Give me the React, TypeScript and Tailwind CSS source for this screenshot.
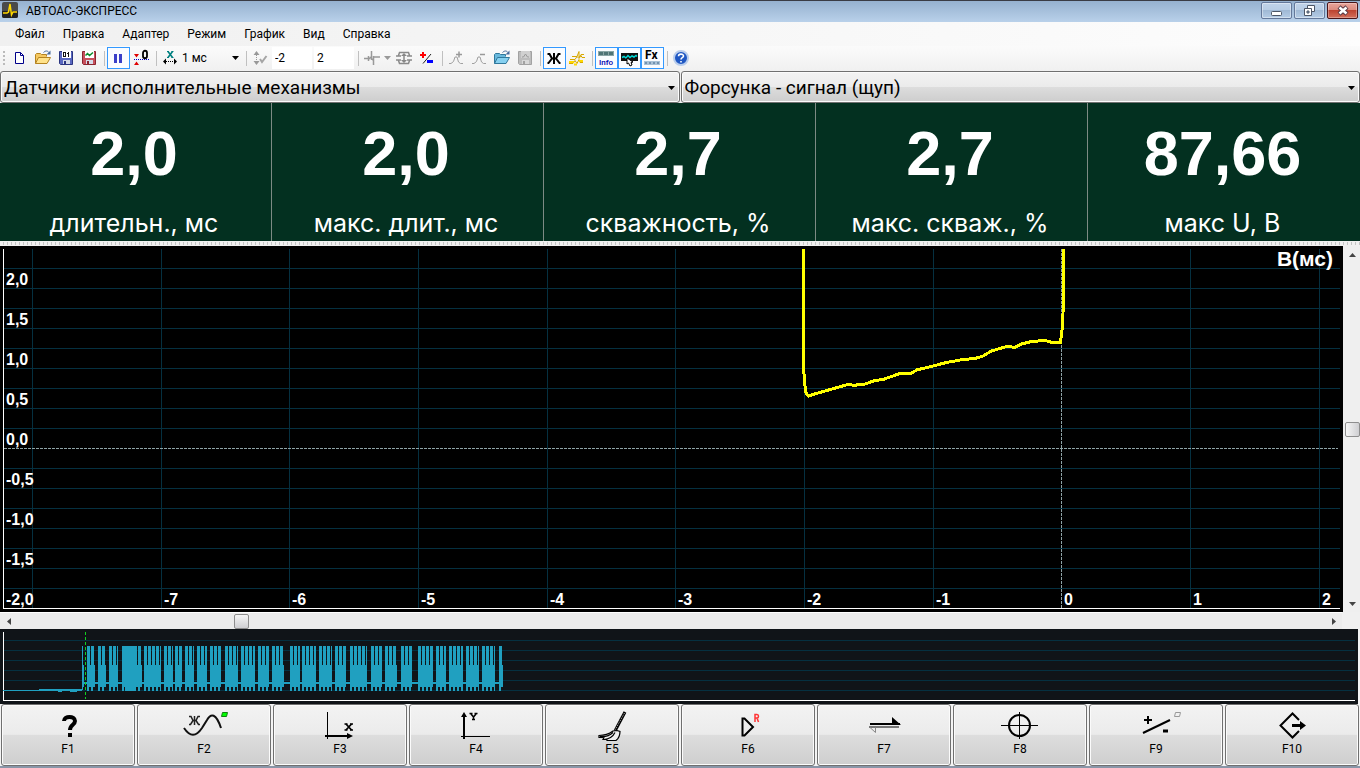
import type { ReactNode } from "react";

const MENU = ["Файл", "Правка", "Адаптер", "Режим", "График", "Вид", "Справка"];

const READINGS = [
  { value: "2,0", label: "длительн., мс" },
  { value: "2,0", label: "макс. длит., мс" },
  { value: "2,7", label: "скважность, %" },
  { value: "2,7", label: "макс. скваж., %" },
  { value: "87,66", label: "макс U, В" },
];

const CHART_W = 1343;
const CHART_H = 366;
const Y_TICKS = ["2,0", "1,5", "1,0", "0,5", "0,0", "-0,5", "-1,0", "-1,5", "-2,0"];
const X_TICKS: [string, number][] = [
  ["-7", 161], ["-6", 289], ["-5", 418], ["-4", 547], ["-3", 675],
  ["-2", 804], ["-1", 933], ["0", 1061], ["1", 1190], ["2", 1319],
];
const H_LINES = Array.from({ length: 17 }, (_, i) => 22 + i * 20);

const TRACE =
  "803.5,3 803.5,120 804.5,136 806,147 808.5,150 813,148.5 830,143.5 848,138.5 854,139.3 865,138 875,134.5 883,133.5 893,130 900.5,127.3 911.5,127.3 916.5,124 933,120 946.5,116.5 963,113.5 975,112.5 983,110 991.5,105 1006.5,100.5 1015,101.3 1021.5,98 1031.5,95.5 1045,94.5 1051.5,96.3 1060.5,96.3 1062,84 1063,70 1063.5,3";

const BURSTS: [number, number][] = [
  [87, 95], [98, 106], [109, 118], [122, 142], [144, 161], [164, 173], [175, 182],
  [185, 194], [197, 207], [210, 221], [225, 238], [241, 255], [258, 269], [272, 284],
  [290, 300], [302, 316], [319, 332], [335, 346], [350, 367], [371, 382], [385, 397],
  [401, 412], [418, 433], [436, 446], [449, 463], [466, 479], [482, 495], [499, 503],
];

function Svg({ w = 16, h = 16, children }: { w?: number; h?: number; children: ReactNode }) {
  return (
    <svg width={w} height={h} viewBox={`0 0 ${w} ${h}`} fill="none" aria-hidden="true" className="shrink-0">
      {children}
    </svg>
  );
}

/* ---------- toolbar icons ---------- */

const NewIcon = () => (
  <Svg>
    <path d="M3.500 2.500h5l3 3v8h-8z" fill="#fff" stroke="#00008b" />
    <path d="M8.500 2.500v3h3" stroke="#00008b" />
  </Svg>
);

function FolderIcon({ back, front, edge }: { back: string; front: string; edge: string }) {
  return (
    <Svg>
      <path d="M.5 13.500v-9l1-1h4l1 1h5v2" fill={back} stroke={edge} />
      <path d="M.5 13.500l3-6h12l-3.500 6z" fill={front} stroke={edge} />
      <path d="M8.500 2.500c2-2 4-2 5.500 0" stroke="#466a9c" />
      <path d="M15.500 .5v4h-4z" fill="#466a9c" />
    </Svg>
  );
}

function DiskIcon({ body, edge, kind }: { body: string; edge: string; kind: "bits" | "wave" | "plain" }) {
  return (
    <Svg>
      <path d="M1.500 1.500h13v13h-12l-1-1z" fill={body} stroke={edge} />
      <path d="M4 1h9v7H4z" fill={kind === "plain" ? "#d0d0d0" : "#fff"} />
      <path d="M5 10h7v4H5z" fill={kind === "plain" ? "#d8d8d8" : "#d5dbe8"} />
      <path d="M6 11h2v3H6z" fill={edge} />
      {kind === "bits" && (
        <>
          <rect x="5.500" y="2.500" width="2" height="4" stroke="#111" />
          <path d="M10.500 2v5M9 3.500h1" stroke="#111" />
        </>
      )}
      {kind === "wave" && <path d="M4.500 5.500l2-2 2 2 3.500-3" stroke="#0a8a2a" strokeWidth="1.500" />}
      {kind === "plain" && <path d="M5 7h1.500l2-3 2 3H12" stroke="#999" />}
    </Svg>
  );
}

const PauseIcon = () => (
  <Svg>
    <path d="M4 4h3v9H4zM9 4h3v9H9z" fill="#3a3fc8" />
  </Svg>
);

const ZeroLevelIcon = () => (
  <Svg w={18} h={18}>
    <path d="M1 5h5L3.500 8.500zM1 16h5L3.500 12.500z" fill="#e00000" />
    <path d="M1 10.500h15" stroke="#0000d0" strokeDasharray="1 1" />
    <path d="M10 4c0-3 4-3 4 0v3c0 3-4 3-4 0z" stroke="#000" strokeWidth="1.800" />
  </Svg>
);

const TimeScaleIcon = () => (
  <Svg>
    <path d="M6 1.500l4.500 6M10.500 1.500l-4.500 6" stroke="#008080" strokeWidth="1.600" />
    <path d="M5 1.500h2M9.500 1.500h2M5 7.500h2M9.500 7.500h2" stroke="#008080" />
    <path d="M1 11.500l3-3v6zM15 11.500l-3-3v6z" fill="#000" />
    <path d="M4 11.500h9" stroke="#000" strokeDasharray="1 1" />
  </Svg>
);

const RangeIcon = () => (
  <Svg>
    <path d="M4.500 1l3 4h-6zM4.500 15l3-4h-6z" fill="#999" />
    <path d="M4.500 5v6" stroke="#999" strokeDasharray="1 1" />
    <path d="M8 9l2 3 4.500-6" stroke="#a5a5a5" strokeWidth="2" />
  </Svg>
);

const PulseIcon = () => (
  <Svg>
    <path d="M0 8.500h5M4.500 6v5M7.500 1v9M7.500 2.500v3M9.500 6v9M10 7h6M5 9l2-2M8 9l2 2" stroke="#999" strokeWidth="1.500" />
  </Svg>
);

const FitIcon = () => (
  <Svg>
    <path d="M2.500 5.500l1-3h9l1 3M2.500 10.500l1 3h9l1-3M0 6h5M0 10h5M11 6h5M11 10h5" stroke="#8a8a8a" strokeWidth="1.500" />
    <path d="M8 3l3 3H5zM8 13l3-3H5z" fill="#888" />
    <path d="M8 5v6" stroke="#888" strokeWidth="1.500" />
  </Svg>
);

const SignIcon = () => (
  <Svg>
    <path d="M1 5h6M4 2v6" stroke="#f00" strokeWidth="2" />
    <path d="M4 13.500L12 4" stroke="#222" />
    <path d="M8 10h6v3H8z" fill="#00f" />
  </Svg>
);

const PeakIcon = ({ plus }: { plus?: boolean }) => (
  <Svg>
    <path d="M1 13.500h2l2.500-2 1.500-4.500h2l1.500 5 2 1.500h2.500" stroke="#a0a0a0" />
    <path d={plus ? "M8 4.500h6M11 1.500v6" : "M9 4.500h5"} stroke="#999" strokeWidth="1.500" />
  </Svg>
);

const ZheIcon = () => (
  <Svg>
    <path
      d="M8 3v11M1.500 4h2l2.500 4.500h4L12.500 4h2M1.500 13h1l3.500-4.500M14.500 13h-1L10 8.500"
      stroke="#000"
      strokeWidth="2"
    />
  </Svg>
);

const YellowWavesIcon = () => (
  <Svg>
    <path d="M0 13.500h4l2-3 2 3 2-4 1 3h3M1 9.500h5l2-3 2 2 2-3 1 2h3M3 6.500h5l2-5v6l2-3h3" stroke="#d8a800" />
    <path d="M0 12h5M5 14.500h3M10 11h4" stroke="#ffd800" strokeWidth="2" />
  </Svg>
);

const InfoIcon = () => (
  <svg width="17" height="18" viewBox="0 0 17 18" aria-hidden="true">
    <path d="M0 2h16v5H0z" fill="#8aa5a6" />
    <path d="M1 3h4v3H1zM6 3h4v3H6zM11 3h4v3h-4z" fill="#4f7476" />
    <text x="1" y="16" fontFamily="Roboto, sans-serif" fontSize="8" fontWeight="500" fill="#0000b0">Info</text>
  </svg>
);

const CursorWaveIcon = () => (
  <Svg w={17} h={18}>
    <path d="M0 4h17v8H0z" fill="#111" />
    <path d="M1 8.500l2-1 2 1.500 2-2.500 2 2 2-1.500 2 1 2-1.500 1 1" stroke="#00d8d8" strokeWidth="1.500" />
    <path d="M6 9l6 4-2 .5 1 2.500-2 1-1.500-3-1.500 1z" fill="#fff" stroke="#000" />
  </Svg>
);

const FxIcon = () => (
  <svg width="17" height="18" viewBox="0 0 17 18" aria-hidden="true">
    <text x="1" y="10" fontFamily="Roboto, sans-serif" fontSize="12" fontWeight="700" fill="#000">Fx</text>
    <path d="M0 12h16v4H0z" fill="#a9c1d6" />
    <path d="M1 13h2v2H1zM5 13h2v2H5zM9 13h2v2H9zM13 13h2v2h-2z" fill="#7292b0" />
  </svg>
);

const HelpIcon = () => (
  <Svg>
    <circle cx="8" cy="8" r="7" fill="#1f57c3" stroke="#b9cdec" strokeWidth="2" />
    <path
      d="M5.500 6.200C5.500 3.500 10.500 3.500 10.500 6c0 1.800-2.500 1.600-2.500 3.500M8 11v1.500"
      stroke="#fff"
      strokeWidth="1.600"
    />
  </Svg>
);

/* ---------- controls ---------- */

const Separator = () => (
  <span className="flex h-[22px] w-[6px] shrink-0 items-center justify-center">
    <span className="h-[15px] w-px bg-[#c0c0c0]" />
  </span>
);

function Tool({ label, on, children }: { label: string; on?: boolean; children: ReactNode }) {
  return (
    <button
      type="button"
      aria-label={label}
      className={
        on
          ? "flex h-[22px] w-[23px] shrink-0 items-center border border-[#3399ff] bg-[#fafcff] pl-[2px]"
          : "flex h-[22px] w-[23px] shrink-0 items-center border border-transparent pl-[2px]"
      }
    >
      {children}
    </button>
  );
}

function Caret({ color = "#000" }: { color?: string }) {
  return (
    <svg width="7" height="4" viewBox="0 0 7 4" aria-hidden="true" className="shrink-0">
      <path d="M0 0h7L3.500 4z" fill={color} />
    </svg>
  );
}

function BigSelect({ label, value }: { label: string; value: string }) {
  return (
    <div className="relative flex-1">
      <select
        aria-label={label}
        defaultValue={value}
        className="block h-8 w-full appearance-none rounded-[3px] border border-[#707070] bg-[linear-gradient(#f3f3f3,#ebebeb_49%,#dddddd_50%,#cdcdcd)] px-[3px] pt-[2px] font-[Roboto,sans-serif] text-[19px] leading-[28px] text-black inset-ring inset-ring-[#fbfbfb]"
      >
        <option>{value}</option>
      </select>
      <span className="pointer-events-none absolute top-[15px] right-[5px]">
        <Caret />
      </span>
    </div>
  );
}

function TitleButton({ label, close, children }: { label: string; close?: boolean; children: ReactNode }) {
  return (
    <button
      type="button"
      aria-label={label}
      className={
        close
          ? "flex h-[17px] w-[31px] items-center justify-center rounded-[2px] border border-[#4a1518] bg-[linear-gradient(#e9a59b,#dc8b7e_45%,#bd4431_50%,#d3705c)] inset-ring inset-ring-white/30"
          : "flex h-[17px] w-[31px] items-center justify-center rounded-[2px] border border-[#64789a] bg-[linear-gradient(#c0d3e9,#b8cde5_45%,#a0b9d5_50%,#b5cce6)] inset-ring inset-ring-white/40"
      }
    >
      {children}
    </button>
  );
}

/* ---------- function key icons, drawn on a 50x30 field ---------- */

const FN_ICONS: ReactNode[] = [
  <>
    <path d="M21 10c0-5.500 11-5.500 11 0 0 4-5 3.500-5 9" stroke="#000" strokeWidth="4" />
    <path d="M25 22h4v4h-4z" fill="#000" />
  </>,
  <>
    <path
      d="M15.500 5v9M10 5.500h2l2 4h3l2-4h2M10 13.500h1.500l2.500-4M21 13.500h-1.500l-2.500-4"
      stroke="#222"
      strokeWidth="1.500"
    />
    <path d="M5 17c6 9 12 9 18 0l5-8c4-7 9-7 14 8" stroke="#111" strokeWidth="2" />
    <path d="M43.500 1.500h5l-1 4h-5z" fill="#0f0" stroke="#108010" />
  </>,
  <>
    <path d="M12.500 1v27" stroke="#000" />
    <path d="M10 25h26" stroke="#000" strokeWidth="2" />
    <path d="M32 22l6 3-6 3z" fill="#000" />
    <path d="M31 13l5.500 6M36.500 13L31 19" stroke="#000" strokeWidth="1.800" />
    <path d="M29.500 13h3M35 13h3M29.500 19h3M35 19h3" stroke="#000" strokeWidth="1.500" />
  </>,
  <>
    <path d="M13 4v24" stroke="#000" strokeWidth="2" />
    <path d="M10 6l3-5 3 5z" fill="#000" />
    <path d="M10 25.500h29" stroke="#000" />
    <path d="M18.500 2.500h3M23.500 2.500h3M20 3l2.500 3L25 3M22.500 6v2.500M21 8.500h3" stroke="#000" strokeWidth="1.500" />
  </>,
  <>
    <path d="M38 1L28 20" stroke="#000" strokeWidth="3" />
    <path d="M37.500 2l-9.500 17" stroke="#bbb" strokeDasharray="1 1" />
    <path
      d="M26 20c-4 3-8 4.500-14 4.500v2h5l-1 2h4v1h9c4-3 4-6 4-9l-3-1zM13 25.500c6 .5 10-1 13-4M17 28.500c6-.5 9-3 11-7"
      fill="#f2f2f2"
      stroke="#000"
      strokeWidth="1.200"
    />
  </>,
  <>
    <path d="M19.500 7.500h2L30 16l-8.500 8.500h-2z" stroke="#000" strokeWidth="2" />
    <path d="M32 11V3.500h2c2 0 2 3.500 0 3.500h-2M34 7l1.500 4" stroke="#f33" strokeWidth="1.500" />
  </>,
  <>
    <path d="M11 13h30" stroke="#000" strokeWidth="2" />
    <path d="M33 6l9 8h-9z" fill="#000" />
    <path d="M10 16h30" stroke="#777" strokeWidth="2" />
    <path d="M11 16.500l5.500 5v-5" stroke="#888" />
  </>,
  <>
    <circle cx="24.500" cy="14.500" r="10.500" stroke="#000" strokeWidth="2" />
    <path d="M6 14.500h37M24.500 1v27" stroke="#000" />
  </>,
  <>
    <path d="M13 9h8M17 5v8" stroke="#000" strokeWidth="2" />
    <path d="M12 22l27-13" stroke="#000" strokeWidth="2" />
    <path d="M32 20h5" stroke="#000" strokeWidth="3" />
    <path d="M44.500 1.500h5l-1 4h-5z" stroke="#999" />
  </>,
  <>
    <path d="M32 9l-6.500-6.500-12 12 12 12L32 20" stroke="#000" strokeWidth="2" />
    <path d="M25 14.500h9" stroke="#000" strokeWidth="3" />
    <path d="M33 10l6 4.500-6 4.500z" fill="#000" />
  </>,
];

function FnKey({ index }: { index: number }) {
  return (
    <button
      type="button"
      className="flex h-[62px] flex-col items-center rounded-[3px] border border-[#707070] bg-[linear-gradient(#f3f3f3,#ebebeb_49%,#dddddd_50%,#cecece)] pt-[6px] font-[Roboto,sans-serif] text-xs leading-[16px] text-black inset-ring inset-ring-[#fbfbfb]"
    >
      <svg width="50" height="30" viewBox="0 0 50 30" fill="none" aria-hidden="true">
        {FN_ICONS[index]}
      </svg>
      F{index + 1}
    </button>
  );
}

/* ---------- signal views ---------- */

function Scope() {
  return (
    <div className="relative min-h-[366px] min-w-0 flex-1 bg-black font-['Liberation_Sans',sans-serif] text-base leading-4 font-bold text-white">
      <svg
        className="absolute inset-0 h-full w-full"
        viewBox={`0 0 ${CHART_W} ${CHART_H}`}
        preserveAspectRatio="none"
        fill="none"
        aria-label="Осциллограмма"
      >
        <g stroke="#053040" shapeRendering="crispEdges">
          {H_LINES.filter((y) => y !== 202).map((y) => (
            <path key={y} d={`M4 ${y + 0.5}H1340`} />
          ))}
          <path d="M32.500 3V362" />
          {X_TICKS.filter(([t]) => t !== "0").map(([t, x]) => (
            <path key={t} d={`M${x + 0.5} 3V362`} />
          ))}
        </g>
        <g stroke="#8ea3a6" strokeDasharray="3 1" shapeRendering="crispEdges">
          <path d="M4 202.500H1338" />
          <path d="M1061.500 3V362" />
        </g>
        <path d="M3.500 3V362.500H1340" stroke="#fff" shapeRendering="crispEdges" />
        <polyline points={TRACE} stroke="#ff0" strokeWidth="3" shapeRendering="crispEdges" />
      </svg>
      {Y_TICKS.map((t, i) => (
        <span
          key={t}
          className="absolute left-[6px] -translate-y-1/2"
          style={{ top: `${((34 + i * 40) / CHART_H) * 100}%` }}
        >
          {t}
        </span>
      ))}
      {X_TICKS.map(([t, x]) => (
        <span key={t} className="absolute bottom-1 ml-[3px]" style={{ left: `${(x / CHART_W) * 100}%` }}>
          {t}
        </span>
      ))}
      <span className="absolute top-[2px] right-[10px] text-[21px] leading-[22px]">В(мс)</span>
    </div>
  );
}

function Overview() {
  return (
    <svg
      className="block h-[75px] w-full bg-[#101418]"
      viewBox="0 0 1360 75"
      preserveAspectRatio="none"
      shapeRendering="crispEdges"
      fill="none"
      aria-label="Обзор записи"
    >
      {[11, 21, 31, 41, 51, 61].map((y) => (
        <path key={y} d={`M4 ${y + 0.5}H1355`} stroke="#053040" />
      ))}
      <path d="M3.500 3V71.500H1355" stroke="#fff" />
      <g fill="#20a0c0">
        <path d="M3 61h79v1H3zM39 60h43v1H39zM58 62h4v1h-4zM70 62h7v1h-7zM82 17h1v44h-1zM83 36h1v22h-1zM84 53h418v2H84z" />
        {BURSTS.map(([a, b]) => {
          const bars: ReactNode[] = [];
          for (let x = a; x < b; x += 4) {
            const w = Math.min(3, b - x);
            bars.push(<rect key={x} x={x} y="17" width={w} height="20" />);
            bars.push(<rect key={`t${x}`} x={x} y="57" width={Math.min(2, w)} height="5" />);
          }
          return (
            <g key={a}>
              <rect x={a} y="36" width={b - a} height="22" />
              {bars}
            </g>
          );
        })}
        <path d="M125 17h11v45h-11z" />
      </g>
      <path d="M85.500 3V70" stroke="#10d020" strokeDasharray="3 2" />
      <path d="M1358 0h2v75h-2z" fill="#f4f4f4" />
    </svg>
  );
}

export default function App() {
  return (
    <div className="flex min-h-screen flex-col bg-[#f0f0f0] font-[Roboto,sans-serif] text-xs text-black">
      <header className="flex h-[22px] items-start border-t border-[#3a3c44] bg-linear-to-b from-[#96b1cf] to-[#b9d1ea] pl-[2px]">
        <span className="mt-px">
          <Svg>
            <rect width="16" height="16" rx="2" fill="#4a4a4a" />
            <path d="M0 9h16v5a2 2 0 0 1-2 2H2a2 2 0 0 1-2-2z" fill="#222" />
            <path d="M1 11h4l1.500-1L8 2l1.500 11 1.500-3h4" stroke="#ffd800" strokeWidth="1.500" />
          </Svg>
        </span>
        <h1 className="ml-2 flex-1 text-xs leading-[20px]">АВТОАС-ЭКСПРЕСС</h1>
        <div className="mr-[2px] flex gap-[2px] pt-px">
          <TitleButton label="Свернуть">
            <Svg w={11} h={11}>
              <rect x=".5" y="6.500" width="10" height="4" rx="1" fill="#fff" stroke="#4d5666" />
            </Svg>
          </TitleButton>
          <TitleButton label="Восстановить">
            <Svg w={13} h={13}>
              <path d="M4.500 1.500h7v6h-7z" fill="#fff" stroke="#4d5666" />
              <path d="M1.500 4.500h7v7h-7z" fill="#fff" stroke="#4d5666" />
              <path d="M4 7h2v2H4z" fill="#8fa9c8" stroke="#4d5666" />
            </Svg>
          </TitleButton>
          <TitleButton label="Закрыть" close>
            <Svg w={12} h={11}>
              <path d="M2 2l8 7M10 2L2 9" stroke="#5a3a44" strokeWidth="4.500" />
              <path d="M2.500 2.500l7 6M9.500 2.500l-7 6" stroke="#fff" strokeWidth="2.500" />
            </Svg>
          </TitleButton>
        </div>
      </header>

      <nav className="flex h-6 items-center gap-[18px] bg-linear-to-r from-[#f0f0f0] to-[#fdfdfd] pl-[15px]">
        {MENU.map((m) => (
          <button key={m} type="button">
            {m}
          </button>
        ))}
      </nav>

      <div role="toolbar" className="flex h-[25px] items-start bg-linear-to-b from-[#fbfbfb] to-[#f0f0f0] pt-px pl-[3px]">
        <span className="mr-1 flex flex-col gap-[2px] pt-1">
          <i className="h-[2px] w-[2px] bg-[#bbb]" />
          <i className="h-[2px] w-[2px] bg-[#bbb]" />
          <i className="h-[2px] w-[2px] bg-[#bbb]" />
          <i className="h-[2px] w-[2px] bg-[#bbb]" />
        </span>
        <Tool label="Новый"><NewIcon /></Tool>
        <Tool label="Открыть"><FolderIcon back="#f5c860" front="#ffe28a" edge="#b58320" /></Tool>
        <Tool label="Сохранить данные"><DiskIcon body="#5a68c0" edge="#2b3580" kind="bits" /></Tool>
        <Tool label="Сохранить график"><DiskIcon body="#c8505c" edge="#8a2630" kind="wave" /></Tool>
        <Separator />
        <Tool label="Пауза" on><PauseIcon /></Tool>
        <Tool label="Нулевой уровень"><ZeroLevelIcon /></Tool>
        <Separator />
        <Tool label="Развёртка"><TimeScaleIcon /></Tool>
        <span className="relative flex h-[22px] w-[61px] items-center">
          <select aria-label="Время на деление" defaultValue="1 мс" className="w-full appearance-none bg-transparent">
            <option>1 мс</option>
          </select>
          <span className="pointer-events-none absolute right-1"><Caret /></span>
        </span>
        <Separator />
        <Tool label="Диапазон"><RangeIcon /></Tool>
        <input aria-label="Минимум" defaultValue="-2" className="h-[22px] w-10 bg-white px-[3px]" />
        <input aria-label="Максимум" defaultValue="2" className="mr-px ml-[2px] h-[22px] w-10 bg-white px-[3px]" />
        <Separator />
        <Tool label="Импульс"><PulseIcon /></Tool>
        <button type="button" aria-label="Вид импульса" className="flex h-[22px] w-[9px] items-center"><Caret color="#999" /></button>
        <Tool label="Вписать"><FitIcon /></Tool>
        <Tool label="Знак"><SignIcon /></Tool>
        <Separator />
        <Tool label="Добавить пик"><PeakIcon plus /></Tool>
        <Tool label="Убрать пик"><PeakIcon /></Tool>
        <Tool label="Открыть эталон"><FolderIcon back="#68b8dc" front="#86d0f0" edge="#30789c" /></Tool>
        <Tool label="Сохранить эталон"><DiskIcon body="#bdbdbd" edge="#a2a2a2" kind="plain" /></Tool>
        <Separator />
        <Tool label="Жёсткая синхронизация" on><ZheIcon /></Tool>
        <Tool label="Слои"><YellowWavesIcon /></Tool>
        <Separator />
        <Tool label="Показатели" on><InfoIcon /></Tool>
        <Tool label="Обзор" on><CursorWaveIcon /></Tool>
        <Tool label="Клавиши" on><FxIcon /></Tool>
        <Separator />
        <Tool label="Помощь"><HelpIcon /></Tool>
      </div>

      <div className="flex gap-px">
        <BigSelect label="Раздел" value="Датчики и исполнительные механизмы" />
        <BigSelect label="Режим измерения" value="Форсунка - сигнал (щуп)" />
      </div>

      <dl className="grid grid-cols-5 bg-[#033020] text-center text-white">
        {READINGS.map((r) => (
          <div
            key={r.label}
            className="flex h-[138px] flex-col-reverse justify-between border-r border-[#7d8a84] pt-[15px] pr-[3px] pb-[3px] last:border-r-0"
          >
            <dt className="font-[Inter,sans-serif] text-[25px] leading-[30px]">{r.label}</dt>
            <dd className="font-['Liberation_Sans',sans-serif] text-[63px] leading-[70px] font-bold">{r.value}</dd>
          </div>
        ))}
      </dl>

      <div className="h-[5px] border-y border-[#f0f0f0] bg-[repeating-linear-gradient(90deg,#f0f0f0_0_3px,#c4c4c4_3px_4px)]" />

      <main className="flex flex-1 bg-[#efefef]">
        <Scope />
        <div className="ml-px flex w-4 flex-col items-center">
          <button type="button" aria-label="Вверх" className="flex h-[17px] items-center">
            <svg width="7" height="4" viewBox="0 0 7 4" aria-hidden="true"><path d="M0 4h7L3.500 0z" fill="#444" /></svg>
          </button>
          <input
            type="range"
            aria-label="Смещение по напряжению"
            defaultValue="50"
            className="m-0 min-h-0 w-[15px] flex-1 appearance-none bg-transparent [writing-mode:vertical-lr] [&::-webkit-slider-thumb]:h-[15px] [&::-webkit-slider-thumb]:w-[15px] [&::-webkit-slider-thumb]:appearance-none [&::-webkit-slider-thumb]:rounded-[2px] [&::-webkit-slider-thumb]:border [&::-webkit-slider-thumb]:border-[#8e8e8e] [&::-webkit-slider-thumb]:bg-linear-to-r [&::-webkit-slider-thumb]:from-[#f6f6f6] [&::-webkit-slider-thumb]:to-[#cfcfd2]"
          />
          <button type="button" aria-label="Вниз" className="flex h-[17px] items-center"><Caret color="#444" /></button>
        </div>
      </main>

      <div className="mr-[18px] flex h-[17px] items-center border-t border-white bg-[#ececec]">
        <button type="button" aria-label="Влево" className="flex w-[17px] justify-center">
          <svg width="4" height="7" viewBox="0 0 4 7" aria-hidden="true"><path d="M4 0v7L0 3.500z" fill="#444" /></svg>
        </button>
        <input
          type="range"
          aria-label="Смещение по времени"
          defaultValue="16.8"
          step="0.1"
          className="m-0 h-[15px] min-w-0 flex-1 appearance-none bg-transparent [&::-webkit-slider-thumb]:h-[15px] [&::-webkit-slider-thumb]:w-[15px] [&::-webkit-slider-thumb]:appearance-none [&::-webkit-slider-thumb]:rounded-[2px] [&::-webkit-slider-thumb]:border [&::-webkit-slider-thumb]:border-[#8e8e8e] [&::-webkit-slider-thumb]:bg-linear-to-b [&::-webkit-slider-thumb]:from-[#f6f6f6] [&::-webkit-slider-thumb]:to-[#cfcfd2]"
        />
        <button type="button" aria-label="Вправо" className="flex w-[17px] justify-center">
          <svg width="4" height="7" viewBox="0 0 4 7" aria-hidden="true"><path d="M0 0v7L4 3.500z" fill="#444" /></svg>
        </button>
      </div>

      <Overview />

      <footer className="grid grid-cols-10 gap-[2px] border-b-2 border-[#8996a8] bg-[#f4f4f4] pr-px pl-px">
        {FN_ICONS.map((_, i) => (
          <FnKey key={i} index={i} />
        ))}
      </footer>
    </div>
  );
}
